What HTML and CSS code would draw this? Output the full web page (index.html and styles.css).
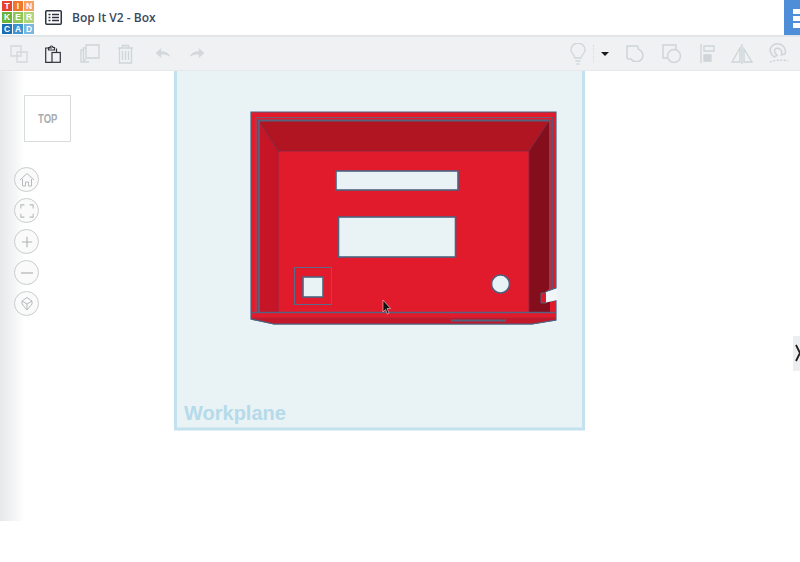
FILE: index.html
```html
<!DOCTYPE html>
<html lang="en">
<head>
<meta charset="utf-8">
<title>Bop It V2 - Box</title>
<link rel="stylesheet" href="styles.css">
</head>
<body>
<div class="app">
  <header class="topbar">
    <div class="logo">
      <span class="tile t1">T</span><span class="tile t2">I</span><span class="tile t3">N</span>
      <span class="tile t4">K</span><span class="tile t5">E</span><span class="tile t6">R</span>
      <span class="tile t7">C</span><span class="tile t8">A</span><span class="tile t9">D</span>
    </div>
    <svg class="list-icon" width="17" height="15" viewBox="0 0 17 15"><rect x="0.750" y="0.750" width="15.500" height="13.500" rx="1" fill="none" stroke="#2c3440" stroke-width="1.500"/><path d="M3.500 4.500h2M7 4.500h7M3.500 7.500h2M7 7.500h7M3.500 10.500h2M7 10.500h7" stroke="#2c3440" stroke-width="1.400"/></svg>
    <h1 class="title">Bop It V2 - Box</h1>
    <div class="side-tab">
      <span class="dot"></span><span class="dot"></span><span class="dot"></span>
    </div>
  </header>
  <nav class="toolbar">
    <div class="tools-left">
      <svg width="18" height="18" viewBox="0 0 18 18" fill="none" stroke="#d3d8dc" stroke-width="1.300"><path d="M1 1h10v10H1z"/><path d="M7 7h10v10H7z"/></svg>
      <svg class="l2" width="16" height="18" viewBox="0 0 16 18" fill="none" stroke="#30343a" stroke-width="1.200"><path d="M7 3H.7v14.300H7"/><path d="M3.500 5V2.500h1.500a1.500 1.500 0 0 1 3 0h1.500V5z"/><path d="M11.500 3.500V7"/><rect x="7" y="7.500" width="8.300" height="9.800" fill="#f1f2f3"/></svg>
      <svg class="l3" width="20" height="19" viewBox="0 0 20 19" fill="none" stroke="#ced4d8" stroke-width="1.300"><path d="M6 1h13v13H6z"/><path d="M6 4H3.500v12H6M3.500 6H1v12h8"/></svg>
      <svg class="l4" width="17" height="20" viewBox="0 0 17 20" fill="none" stroke="#d0d5d9" stroke-width="1.300"><path d="M1 4h15M5.500 4V1.500h6V4M2.500 4v15h12V4M5.500 7v9M8.500 7v9M11.500 7v9"/></svg>
      <svg class="l5" width="16" height="11" viewBox="0 0 16 12" fill="#d3d8dc"><path d="M0 5.500 6 0v3.500c5 0 8 2 10 6-3-2-6-2.500-10-2.500v4z"/></svg>
      <svg class="l6" width="16" height="11" viewBox="0 0 16 12" fill="#d3d8dc"><path d="M16 5.500 10 0v3.500c-5 0-8 2-10 6 3-2 6-2.500 10-2.500v4z"/></svg>
    </div>
    <div class="tools-right">
      <svg width="16" height="22" viewBox="0 0 16 22" fill="none" stroke="#d0d5d9" stroke-width="1.300"><path d="M5 15c0-3-4-4-4-8a7 7 0 0 1 14 0c0 4-4 5-4 8z"/><path d="M5.500 18h5M6.500 21h3"/></svg>
      <span class="caret-box"><span class="caret"></span></span>
      <svg class="r1" width="19" height="17" viewBox="0 0 19 17" fill="none" stroke="#ced4d8" stroke-width="1.500"><path d="M1 1h10.500l1 3.200a6.500 6.500 0 1 1-7.500 9.800H2L1 13z"/></svg>
      <svg class="r2" width="19" height="19" viewBox="0 0 19 19" fill="none" stroke="#ced4d8" stroke-width="1.400"><path d="M5 14H1V1h13v4"/><circle cx="12" cy="12" r="6.500"/></svg>
      <svg class="r3" width="15" height="19" viewBox="0 0 15 19" fill="none" stroke="#ced4d8" stroke-width="1.300"><path d="M1 0v19"/><path d="M4 2h10v5H4z"/><path d="M4 11h7v6H4z" fill="#d0d5d9"/></svg>
      <svg class="r4" width="22" height="20" viewBox="0 0 22 20" fill="none" stroke="#ced4d8" stroke-width="1.300"><path d="M9 4 1 18h8zM13 5l8 13h-8z"/><path d="M11 0v20"/></svg>
      <svg class="r5" width="21" height="21" viewBox="0 0 21 21" fill="none" stroke="#ced4d8" stroke-width="1.500"><path d="M6 14C2 10 1 6 4 3 7 0 12 0 15 3c2 2 3 5 2 8l-3.500 1c1-3-.5-6-2.500-6.500C8.500 4.500 6 6 6.500 8.500 7 10 8 11 9 12.500z"/><path d="M2 19c5-2 12-2.500 18-1" stroke-dasharray="2 1.500"/></svg>
    </div>
  </nav>
  <main class="stage">
    <div class="left-fade"></div>
    <svg class="scene" viewBox="0 71 800 491" width="800" height="491">
      <rect x="175.500" y="60" width="408" height="369" fill="#e9f2f5" stroke="#c3e2ee" stroke-width="3"/>
      <text x="184" y="420" class="wp-label">Workplane</text>
      <path d="M251 112H556V288L545 292V303L556 300V320L532 324H274L251 319Z" fill="#e21b2c" stroke="#4d6380" stroke-width="1.200"/>
      <path d="M252 319 274 324H532L555.500 320V318H252Z" fill="#c31829"/>
      <path d="M278 151H529L549 121H259Z" fill="#b01521"/>
      <path d="M259 121L278 151V312H259Z" fill="#c51526"/>
      <path d="M529 151L549 121V289L545 292V303L550 301.500V312H529Z" fill="#850e1c"/>
      <rect x="278" y="151" width="251" height="161" fill="#e21b2c"/>
      <path d="M278 151H529M278 151V312M529 151V312" fill="none" stroke="#7d2a45" stroke-width="0.800"/>
      <path d="M259 121 278 151M549 121 529 151" stroke="#6a3550" stroke-width="0.800"/>
      <path d="M256 117.500H552" stroke="#5b6a85" stroke-width="0.800" fill="none"/>
      <path d="M258 120.500H550" stroke="#56627f" stroke-width="2.200" fill="none"/>
      <path d="M259 120V312" stroke="#56627f" stroke-width="1.800" fill="none"/>
      <path d="M256 117V312" stroke="#5b6a85" stroke-width="0.800" fill="none"/>
      <path d="M550 120V290M552.500 117V289" stroke="#5e5572" stroke-width="0.900" fill="none"/>
      <path d="M252 312.500H556" stroke="#56627f" stroke-width="1.500"/>
      <path d="M252 318H556" stroke="#a3283d" stroke-width="0.800"/>
      <path d="M251 319 274 324H532L556 320" fill="none" stroke="#4d6380" stroke-width="1.200"/>
      <path d="M451 320.500H506" stroke="#4d6380" stroke-width="2"/>
      <path d="M541 293H546V303H541Z" fill="#d71a2b" stroke="#4d6380" stroke-width="1"/>
      <path d="M546 292.500 557 288.500V300L546 302.500Z" fill="#f0f6f8"/>
      <rect x="336" y="171" width="122" height="19" fill="#e9f2f5" stroke="#4d6380" stroke-width="1.600"/>
      <rect x="338.500" y="217" width="117" height="40" fill="#e9f2f5" stroke="#4d6380" stroke-width="1.600"/>
      <rect x="294.500" y="267.500" width="37" height="37" fill="none" stroke="#5a6a8a" stroke-width="1"/>
      <rect x="303" y="277" width="20" height="20" fill="#e9f2f5" stroke="#4d6380" stroke-width="1.600"/>
      <circle cx="500.500" cy="284" r="9" fill="#e9f2f5" stroke="#4d6380" stroke-width="1.600"/>
      <path d="M383 300V312L385.500 309.500 387.500 314 389 313 387 308.500H390.500Z" fill="#111" stroke="#fff" stroke-width="0.500"/>
    </svg>
    <div class="cube-top"><span class="cube-label">TOP</span></div>
    <div class="view-controls">
      <button class="round"><svg width="16" height="16" viewBox="0 0 16 16" fill="none" stroke="#b5babd" stroke-width="1"><path d="M1 8 8 1.500 15 8M3.500 7v7h3V10h3v4h3V7"/></svg></button>
      <button class="round"><svg width="14" height="14" viewBox="0 0 16 16" fill="none" stroke="#b5babd" stroke-width="1.200"><path d="M1 5V1h4M11 1h4v4M15 11v4h-4M5 15H1v-4"/></svg></button>
      <button class="round"><svg width="12" height="12" viewBox="0 0 14 14" fill="none" stroke="#aeb3b6" stroke-width="1.300"><path d="M7 1v12M1 7h12"/></svg></button>
      <button class="round"><svg width="14" height="14" viewBox="0 0 14 14" fill="none" stroke="#aeb3b6" stroke-width="1.200"><path d="M1 7h12"/></svg></button>
      <button class="round"><svg width="16" height="16" viewBox="0 0 16 16" fill="none" stroke="#b5babd" stroke-width="1"><path d="M8 1.500 13 5 8 8 3 5zM3 5v3l5 6 5-6V5M8 8v6"/></svg></button>
    </div>
    <div class="edge-tab">
      <svg width="7" height="26" viewBox="0 0 7 26" fill="none" stroke="#1d1d1d" stroke-width="1.800"><path d="M3 5 7 13 3 21"/></svg>
    </div>
  </main>
</div>
</body>
</html>
```
FILE: styles.css
```css
html, body {
  margin: 0;
  padding: 0;
  overflow: hidden;
  background: #fff;
}
.app {
  width: 800px;
  height: 562px;
  display: flex;
  flex-direction: column;
  font-family: "Open Sans", "Liberation Sans", sans-serif;
}
.topbar {
  height: 35px;
  display: flex;
  align-items: center;
  background: #fff;
  border-bottom: 2px solid #e3e6e8;
}
.logo {
  width: 32px;
  height: 33px;
  margin-left: 2px;
  display: grid;
  grid-template-columns: repeat(3, minmax(0, 1fr));
  grid-template-rows: repeat(3, minmax(0, 1fr));
  gap: 1px;
}
.tile {
  display: flex;
  align-items: center;
  justify-content: center;
  min-height: 0;
  color: #fff;
  font: 700 8.500px/1 "Liberation Sans", sans-serif;
}
.t1 { background: #e5432c; }
.t2 { background: #f2762e; }
.t3 { background: #f8a060; }
.t4 { background: #6ab43d; }
.t5 { background: #8cc75a; }
.t6 { background: #b2d57c; }
.t7 { background: #1c6fb5; }
.t8 { background: #3e93cf; }
.t9 { background: #7ab6de; }
.list-icon { margin-left: 11px; }
.title {
  margin: 0 0 0 10px;
  font-size: 12px;
  font-weight: 600;
  color: #3a485c;
  line-height: 1;
  white-space: nowrap;
}
.side-tab {
  margin-left: auto;
  width: 16px;
  height: 35px;
  background: #4e8ed8;
  box-sizing: border-box;
  padding: 9px 0 0 9px;
  display: flex;
  flex-direction: column;
  gap: 2px;
}
.dot {
  width: 7px;
  height: 5px;
  background: #fff;
}
.toolbar {
  height: 33px;
  display: flex;
  align-items: center;
  justify-content: space-between;
  background: #eff1f2;
  border-bottom: 1px solid #e6e8ea;
}
.tools-left, .tools-right {
  display: flex;
  align-items: center;
}
.tools-left { padding-left: 10px; }
.tools-right { padding-right: 11px; }
.l2 { margin-left: 17px; }
.l3 { margin-left: 19px; }
.l4 { margin-left: 17px; }
.l5 { margin-left: 21px; }
.l6 { margin-left: 18px; }
.caret-box {
  margin-left: 7px;
  width: 25px;
  height: 18px;
  display: flex;
  align-items: center;
  padding-left: 7px;
  box-sizing: border-box;
  border-left: 1px dotted #d7dbde;
}
.caret {
  width: 0;
  height: 0;
  border-left: 4px solid transparent;
  border-right: 4px solid transparent;
  border-top: 4px solid #1a1a1a;
}
.r1 { margin-left: 8px; }
.r2 { margin-left: 17px; }
.r3 { margin-left: 19px; }
.r4 { margin-left: 16px; }
.r5 { margin-left: 15px; }
.stage {
  position: relative;
  flex: 1;
  overflow: hidden;
  background: #fff;
}
.scene {
  position: absolute;
  left: 0;
  top: 0;
  display: block;
}
.wp-label {
  font: 700 20px "Liberation Sans", Arial, sans-serif;
  fill: #b5dbea;
}
.left-fade {
  position: absolute;
  left: 0;
  top: 0;
  width: 24px;
  height: 450px;
  background: linear-gradient(to right, #e6e9ea, #f6f7f7 70%, #ffffff);
  z-index: 1;
}
.cube-top {
  position: absolute;
  left: 24px;
  top: 24px;
  width: 47px;
  height: 47px;
  box-sizing: border-box;
  border: 1.500px solid #d9dcdd;
  background: #fff;
  display: flex;
  align-items: center;
  justify-content: center;
  z-index: 2;
}
.cube-label {
  font: 700 12.500px "Liberation Sans", Arial, sans-serif;
  color: #a9adb0;
  transform: scaleX(0.76);
}
.view-controls {
  position: absolute;
  left: 14px;
  top: 96px;
  display: flex;
  flex-direction: column;
  gap: 6px;
  z-index: 2;
}
.round {
  width: 25px;
  height: 25px;
  padding: 0;
  border-radius: 50%;
  border: 1px solid #c9cccd;
  background: #fafafa;
  display: flex;
  align-items: center;
  justify-content: center;
}
.edge-tab {
  position: absolute;
  right: 0;
  top: 265px;
  width: 7px;
  height: 35px;
  padding-top: 4px;
  box-sizing: border-box;
  background: #eceeef;
  overflow: hidden;
}
```
